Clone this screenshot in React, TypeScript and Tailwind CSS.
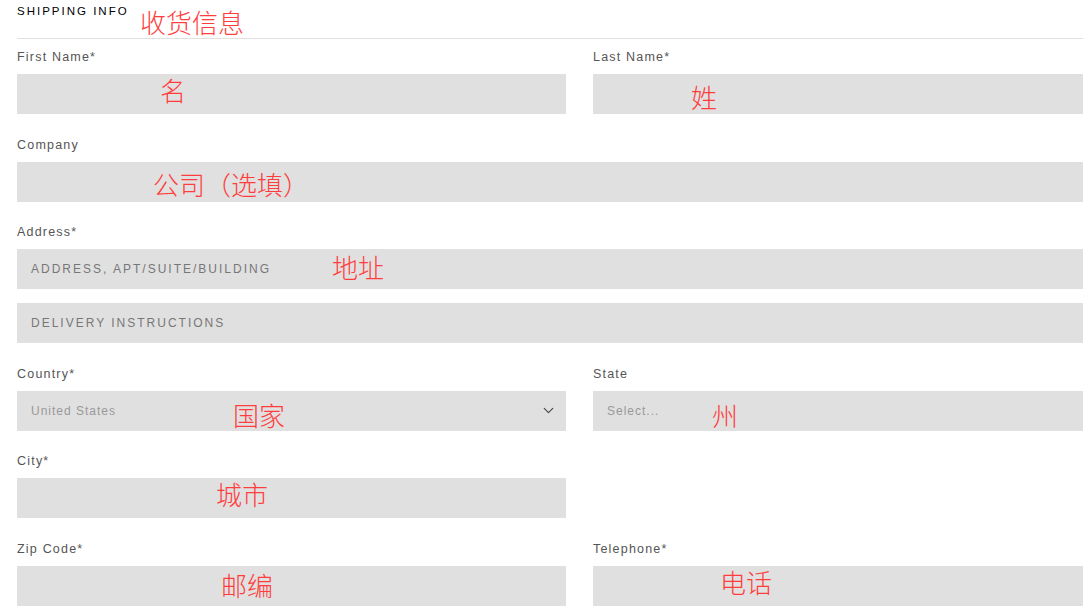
import React from 'react';
import { ChevronDown } from 'lucide-react';

const labelCls = "block text-[12.5px] leading-[14px] tracking-[1.2px] text-[#555] pt-[1px] mb-[10px]";
const inputCls = "w-full h-10 bg-[#e0e0e0] px-[14px] flex items-center";

function Field({ label, children }: { label: string; children?: React.ReactNode }) {
  return (
    <div>
      <span className={labelCls}>{label}</span>
      {children ?? <div className={inputCls} />}
    </div>
  );
}

function Placeholder({ text }: { text: string }) {
  return (
    <div className={inputCls}>
      <span className="text-[12px] uppercase tracking-[2px] text-[#777]">{text}</span>
    </div>
  );
}

// red annotations laid over the form
const notes = [
  { t: '收货信息', x: 140, y: 9 },
  { t: '名', x: 160, y: 77 },
  { t: '姓', x: 691, y: 84 },
  { t: '公司（选填）', x: 153, y: 171 },
  { t: '地址', x: 332, y: 254 },
  { t: '国家', x: 233, y: 402 },
  { t: '州', x: 712, y: 402 },
  { t: '城市', x: 216, y: 481 },
  { t: '邮编', x: 221, y: 572 },
  { t: '电话', x: 720, y: 569 },
];

export default function App() {
  return (
    <div className="relative w-full h-[610px] overflow-hidden bg-white" style={{ fontFamily: '"Liberation Sans", Arial, sans-serif' }}>
      <div className="w-[1125px] ml-[17px]">
        <div className="h-[39px] border-b border-[#e0e0e0] pt-[4px]">
          <h2 className="text-[11.5px] leading-[14px] tracking-[2px] text-black">SHIPPING INFO</h2>
        </div>

        <div className="flex flex-col gap-[22.5px] pt-[10px]">
          <div className="grid grid-cols-2 gap-[27px]">
            <Field label="First Name*" />
            <Field label="Last Name*" />
          </div>

          <Field label="Company" />

          <div>
            <span className={labelCls}>Address*</span>
            <div className="flex flex-col gap-[14px]">
              <Placeholder text="Address, Apt/Suite/Building" />
              <Placeholder text="Delivery Instructions" />
            </div>
          </div>

          <div className="grid grid-cols-2 gap-[27px]">
            <Field label="Country*">
              <div className={inputCls + " justify-between pr-[9px]"}>
                <span className="text-[12px] tracking-[1px] text-[#999]">United States</span>
                <ChevronDown size={17} strokeWidth={1.6} className="text-[#444]" />
              </div>
            </Field>
            <Field label="State">
              <div className={inputCls}>
                <span className="text-[12px] tracking-[1px] text-[#999]">Select...</span>
              </div>
            </Field>
          </div>

          <div className="grid grid-cols-2 gap-[27px]">
            <Field label="City*" />
            <div />
          </div>

          <div className="grid grid-cols-2 gap-[27px]">
            <Field label="Zip Code*" />
            <Field label="Telephone*" />
          </div>
        </div>
      </div>

      {notes.map((n) => (
        <span
          key={n.t}
          className="absolute text-[26px] leading-none text-[#ff3d3d] font-light whitespace-nowrap"
          style={{ left: n.x, top: n.y, fontFamily: '"Noto Sans CJK SC", sans-serif' }}
        >
          {n.t}
        </span>
      ))}
    </div>
  );
}
